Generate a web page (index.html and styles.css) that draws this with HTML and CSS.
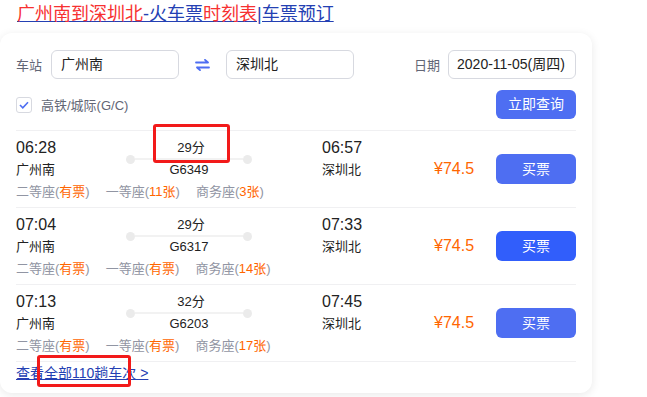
FILE: index.html
```html
<!DOCTYPE html>
<html lang="zh">
<head>
<meta charset="utf-8">
<link rel="stylesheet" href="styles.css">
</head>
<body>
<h3 class="title"><a href="#"><em>广州南到深圳北</em>-火车票<em>时刻表</em>|车票预订</a></h3>
<div class="card">
  <div class="search-row">
    <span class="label">车站</span>
    <div class="input">广州南</div>
    <span class="swap"><svg width="15" height="12" viewBox="0 0 15 12"><path d="M1 3.5h12M10 0.8l3 2.7M14 8.5H2M5 11.2L2 8.5" stroke="#4e6ef2" stroke-width="1.8" fill="none" stroke-linecap="round"/></svg></span>
    <div class="input">深圳北</div>
    <span class="label date-label">日期</span>
    <div class="input date">2020-11-05(周四)</div>
  </div>
  <div class="search-row2">
    <label class="check"><span class="box"><svg width="10" height="8" viewBox="0 0 10 8"><path d="M1 4l2.8 2.8L9 1.3" stroke="#4e6ef2" stroke-width="1.6" fill="none"/></svg></span>高铁/城际(G/C)</label>
    <span class="btn">立即查询</span>
  </div>

  <div class="train">
    <div class="info">
      <div class="cols">
        <div class="dep"><div class="time">06:28</div><div class="st">广州南</div></div>
        <div class="mid"><div class="dur">29分</div><div class="line"><i></i><b></b><i></i></div><div class="no">G6349</div></div>
        <div class="arr"><div class="time">06:57</div><div class="st">深圳北</div></div>
      </div>
      <div class="seats"><span>二等座(<em>有票</em>)</span><span>一等座(<em>11张</em>)</span><span>商务座(<em>3张</em>)</span></div>
    </div>
    <div class="price">¥74.5</div>
    <span class="btn buy">买票</span>
  </div>

  <div class="train">
    <div class="info">
      <div class="cols">
        <div class="dep"><div class="time">07:04</div><div class="st">广州南</div></div>
        <div class="mid"><div class="dur">29分</div><div class="line"><i></i><b></b><i></i></div><div class="no">G6317</div></div>
        <div class="arr"><div class="time">07:33</div><div class="st">深圳北</div></div>
      </div>
      <div class="seats"><span>二等座(<em>有票</em>)</span><span>一等座(<em>有票</em>)</span><span>商务座(<em>14张</em>)</span></div>
    </div>
    <div class="price">¥74.5</div>
    <span class="btn buy hover">买票</span>
  </div>

  <div class="train">
    <div class="info">
      <div class="cols">
        <div class="dep"><div class="time">07:13</div><div class="st">广州南</div></div>
        <div class="mid"><div class="dur">32分</div><div class="line"><i></i><b></b><i></i></div><div class="no">G6203</div></div>
        <div class="arr"><div class="time">07:45</div><div class="st">深圳北</div></div>
      </div>
      <div class="seats"><span>二等座(<em>有票</em>)</span><span>一等座(<em>有票</em>)</span><span>商务座(<em>17张</em>)</span></div>
    </div>
    <div class="price">¥74.5</div>
    <span class="btn buy">买票</span>
  </div>

  <a class="more" href="#">查看全部110趟车次 &gt;</a>
</div>
<div class="mark mark1"></div>
<div class="mark mark2"></div>
</body>
</html>
```
FILE: styles.css
```css
* { box-sizing: border-box; }
body {
  margin: 0;
  font-family: Arial, "Liberation Sans", "Noto Sans CJK SC", sans-serif;
  color: #222;
  background: #fff;
  position: relative;
  width: 647px;
  height: 397px;
  overflow: hidden;
}
.title {
  margin: 0;
  padding: 3px 0 0 17px;
  height: 33px;
  font-size: 18px;
  font-weight: normal;
  line-height: 22px;
}
.title a { color: #2440b3; text-decoration: underline; }
.title em { font-style: normal; color: #f73131; }
.card {
  width: 592px;
  height: 360px;
  border-radius: 12px;
  box-shadow: 0 2px 10px rgba(0,0,0,0.09);
  padding: 17px 16px 0 16px;
  background: #fff;
}
.search-row {
  display: flex;
  align-items: center;
  height: 29px;
}
.label { font-size: 13px; color: #626675; margin-right: 9px; white-space: nowrap; flex: none; }
.input {
  flex: none;
  width: 128px;
  height: 29px;
  border: 1px solid #d7d9e0;
  border-radius: 6px;
  font-size: 14px;
  line-height: 27px;
  padding-left: 9px;
  color: #222;
  white-space: nowrap;
}
.swap { flex: none; width: 47px; display: flex; justify-content: center; padding-top: 1px; }
.date-label { margin-left: 60px; margin-right: 8px; }
.input.date { padding-left: 8px; }
.search-row2 {
  margin-top: 11px;
  display: flex;
  justify-content: space-between;
  align-items: center;
  height: 29px;
  border-bottom: 1px solid #f0f0f2;
  box-sizing: content-box;
  padding-bottom: 11px;
}
.check { display: flex; align-items: center; font-size: 13px; color: #626675; }
.box {
  width: 16px; height: 16px;
  border: 1px solid #d7d9e0;
  border-radius: 3px;
  display: flex; align-items: center; justify-content: center;
  margin-right: 9px;
  margin-top: 1px;
}
.btn {
  flex: none;
  display: inline-block;
  width: 80px;
  height: 29px;
  border-radius: 6px;
  background: #4e6ef2;
  color: #fff;
  font-size: 14px;
  line-height: 29px;
  text-align: center;
}
.train {
  display: flex;
  align-items: center;
  height: 77px;
  border-bottom: 1px solid #f0f0f2;
}
.info { flex: none; width: 418px; padding-top: 1px; }
.cols { display: flex; }
.dep { width: 110px; }
.mid { width: 126px; text-align: center; position: relative; }
.arr { width: 182px; padding-left: 70px; }
.time { font-size: 16px; line-height: 22px; color: #222; }
.st, .dur, .no { font-size: 13px; line-height: 22px; color: #222; }
.dur { padding-left: 4px; }
.line {
  position: absolute;
  left: 0; right: 0; top: 18px;
  display: flex; align-items: center;
}
.line i { width: 9px; height: 9px; border-radius: 50%; background: #ebebeb; flex: none; }
.line b { flex: 1; height: 2px; background: #f2f2f2; }
.seats { font-size: 13px; line-height: 22px; color: #9195a3; display: flex; white-space: nowrap; gap: 16px; }
.seats em { font-style: normal; color: #ff6600; }
.price { flex: none; width: 62px; font-size: 16px; color: #ff6600; white-space: nowrap; }
.btn.buy { height: 30px; line-height: 30px; }
.btn.hover { background: #315efb; }
.more {
  display: inline-block;
  font-size: 14px;
  line-height: 22px;
  color: #2440b3;
  text-decoration: underline;
}
.mark {
  position: absolute;
  border: 3px solid #f21a1a;
  border-radius: 3px;
}
.mark1 { left: 153px; top: 124px; width: 77px; height: 39px; }
.mark2 { left: 37px; top: 355px; width: 94px; height: 32px; }
```
